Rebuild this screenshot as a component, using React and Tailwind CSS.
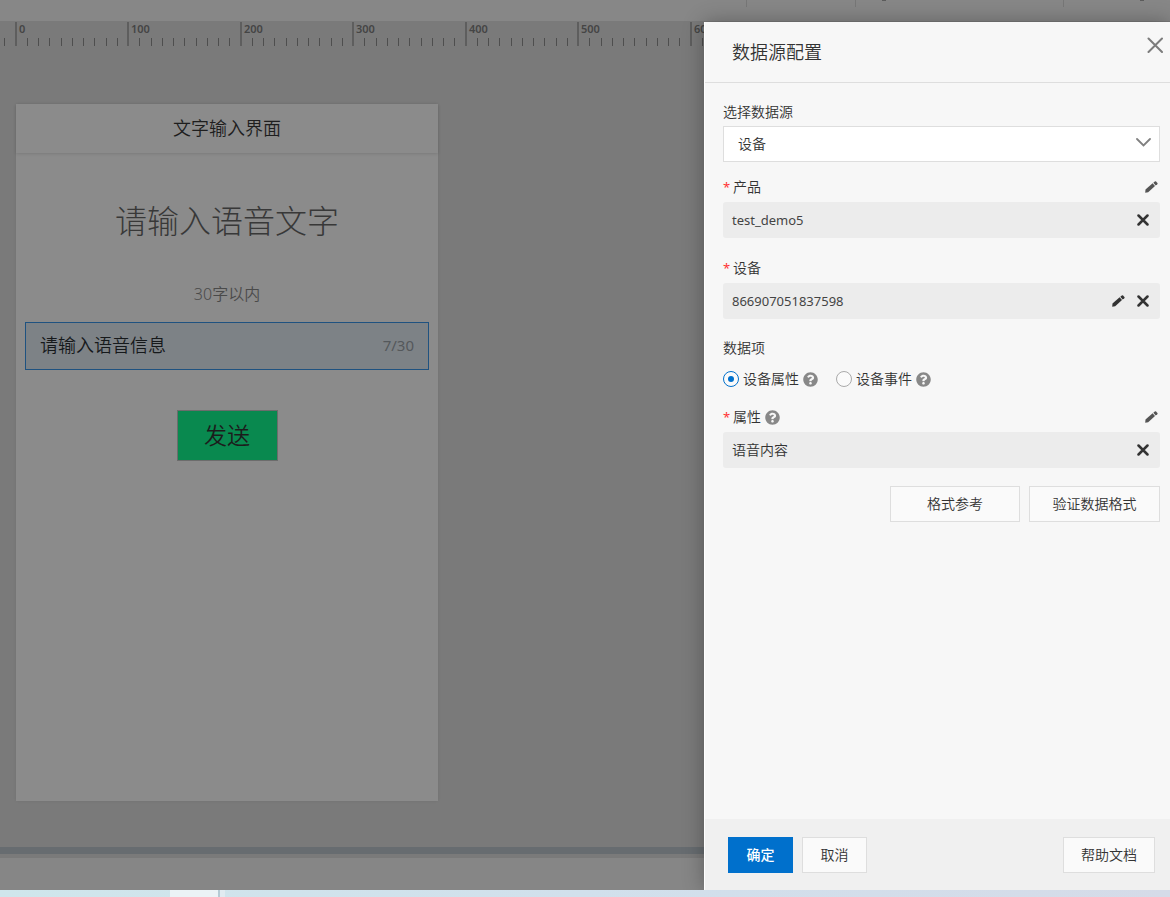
import React, { useState } from 'react';
import { FaQuestionCircle } from 'react-icons/fa';

const RULER_ORIGIN = 16;
const RULER_STEP = 112.5;

const Ruler = () => {
  const ticks = [];
  for (let i = -1; i < 110; i++) {
    const x = Math.floor(RULER_ORIGIN + (i * RULER_STEP) / 10);
    const major = i % 10 === 0;
    ticks.push(
      <rect key={i} x={major ? x - 1 : x} y={major ? 1 : 17} width={major ? 2 : 1} height={major ? 24 : 8} fill={major ? '#5e5e5e' : '#4e4e4e'} />
    );
    if (major) {
      ticks.push(
        <text key={`t${i}`} x={x + 3} y="12" fontSize="11" fontWeight="600" fill="#454545">{i * 10}</text>
      );
    }
  }
  return <svg className="block w-full h-[25px] bg-[#7a7a7a]" aria-hidden="true">{ticks}</svg>;
};

const PencilIcon = () => (
  <svg width="13" height="12" viewBox="0 0 13 12" fill="currentColor" aria-hidden="true">
    <path d="M0.2 11.8 L0.5 8.4 L7.6 2.3 L10 5 L3.2 11.2 Z" />
    <path d="M8.3 1.7 L9.8 0.5 Q10.5 0 11.1 0.6 L12.4 2 Q13 2.7 12.3 3.3 L10.7 4.5 Z" />
  </svg>
);

const CrossIcon = () => (
  <svg width="12" height="12" viewBox="0 0 12 12" fill="none" stroke="currentColor" strokeWidth="2.5" strokeLinecap="round" aria-hidden="true">
    <path d="M1.5 1.5 L10.5 10.5 M10.5 1.5 L1.5 10.5" />
  </svg>
);

const IconButton = ({ label, children }) => (
  <button type="button" aria-label={label} className="flex items-center justify-center cursor-pointer">
    {children}
  </button>
);

const Help = () => <FaQuestionCircle size={15} className="text-[#888888] shrink-0" aria-hidden="true" />;

const Field = ({ label, value, help, editOnLabel, editInside }) => (
  <div>
    <div className="flex items-center justify-between h-5 pr-[2px] text-[#555555]">
      <span className="flex items-center gap-1 text-[#333333]">
        <span className="w-[6px] text-[13px] font-normal text-[#ff3333]">*</span>
        <span>{label}</span>
        {help && <Help />}
      </span>
      {editOnLabel && <IconButton label={`编辑${label}`}><PencilIcon /></IconButton>}
    </div>
    <div className="mt-[5px] h-9 rounded-[3px] bg-[#ececec] pl-[9px] pr-[11px] flex items-center justify-between">
      <span>{value}</span>
      <span className="flex items-center gap-3 text-[#333333]">
        {editInside && <IconButton label={`编辑${label}`}><PencilIcon /></IconButton>}
        <IconButton label={`清除${label}`}><CrossIcon /></IconButton>
      </span>
    </div>
  </div>
);

const RadioOption = ({ label, checked, onChange }) => (
  <label className="flex items-center gap-1 cursor-pointer">
    <input
      type="radio"
      name="dataItem"
      checked={checked}
      onChange={onChange}
      className="appearance-none w-4 h-4 rounded-full border border-[#aaaaaa] bg-[#fafafa] flex items-center justify-center checked:border-[#0070cc] checked:before:block checked:before:w-[6px] checked:before:h-[6px] checked:before:rounded-full checked:before:bg-[#0070cc]"
    />
    <span>{label}</span>
    <Help />
  </label>
);

const PhonePreview = () => {
  const [text, setText] = useState('请输入语音信息');
  return (
    <section className="w-[422px] flex-1 bg-[#8b8b8b] shadow-[0_0_3px_rgba(0,0,0,0.08)] flex flex-col items-center font-[350]">
      <h1 className="w-full h-[49px] leading-[49px] text-center text-[18px] text-[#1e1e1e] shadow-[0_1px_3px_rgba(0,0,0,0.12)]">文字输入界面</h1>
      <p className="mt-12 text-[32px] leading-10 h-10 font-light text-[#383838]">请输入语音文字</p>
      <p className="mt-[41px] text-[16px] leading-6 text-[#4a4a4a]">30字以内</p>
      <div className="mt-4 w-[404px] h-[48px] px-[14px] pb-[2px] border border-[#1f5280] bg-[#7d8286] flex items-center">
        <input
          aria-label="语音信息"
          maxLength={30}
          value={text}
          onChange={(e) => setText(e.target.value)}
          className="flex-1 min-w-0 bg-transparent outline-none text-[18px] text-[#16191b]"
        />
        <span className="text-[15px] font-normal text-[#54585b]">{text.length}/30</span>
      </div>
      <button type="button" className="mt-10 w-[101px] h-[51px] border border-[#6c6c6c] bg-[#09894f] text-[23px] text-[#1c1c1c]">发送</button>
    </section>
  );
};

const plainButton = 'h-9 border border-[#dedede] bg-[#fafafa] text-center cursor-pointer';

const DataSourceDrawer = () => {
  const [item, setItem] = useState('property');
  return (
    <aside className="absolute right-0 top-[22px] bottom-[7px] w-[466px] border-l border-white bg-[#f7f7f7] text-[#333333] text-[14px] leading-5 font-[350] shadow-[0_0_20px_rgba(0,0,0,0.3)] flex flex-col">
      <header className="flex items-start justify-between pl-[27px] pr-[7px] border-b border-[#dedede]">
        <h2 className="text-[18px] leading-[60px]">数据源配置</h2>
        <button type="button" aria-label="关闭" className="mt-[15px] text-[#7c7c7c] cursor-pointer">
          <svg width="16" height="16" viewBox="0 0 16 16" fill="none" stroke="currentColor" strokeWidth="2" strokeLinecap="round" aria-hidden="true">
            <path d="M1.5 1.5 L15 15 M15 1.5 L1.5 15" />
          </svg>
        </button>
      </header>

      <div className="flex-1 pt-[19px] pl-[18px] pr-[10px]">
        <label htmlFor="source" className="block">选择数据源</label>
        <div className="grid items-center mt-1">
          <select id="source" defaultValue="device" className="col-start-1 row-start-1 appearance-none w-full h-9 pl-[14px] pr-8 bg-white border border-[#dedede]">
            <option value="device">设备</option>
          </select>
          <svg className="col-start-1 row-start-1 justify-self-end mr-[9px] mb-1 pointer-events-none" width="15" height="9" viewBox="0 0 15 9" fill="none" stroke="#808080" strokeWidth="1.8" strokeLinecap="round" aria-hidden="true">
            <path d="M1 1 L7.5 7.5 L14 1" />
          </svg>
        </div>

        <div className="mt-[15px]">
          <Field label="产品" value={<span className="text-[13px] font-normal text-[#444444]">test_demo5</span>} editOnLabel />
        </div>
        <div className="mt-5">
          <Field label="设备" value={<span className="text-[13px] font-normal text-[#444444]">866907051837598</span>} editInside />
        </div>

        <fieldset className="mt-[19px]">
          <legend>数据项</legend>
          <div className="mt-[11px] flex items-center gap-[18px]">
            <RadioOption label="设备属性" checked={item === 'property'} onChange={() => setItem('property')} />
            <RadioOption label="设备事件" checked={item === 'event'} onChange={() => setItem('event')} />
          </div>
        </fieldset>

        <div className="mt-[18px]">
          <Field label="属性" value="语音内容" help editOnLabel />
        </div>

        <div className="mt-[18px] flex justify-end gap-[9px]">
          <button type="button" className={`${plainButton} w-[130px]`}>格式参考</button>
          <button type="button" className={`${plainButton} w-[131px]`}>验证数据格式</button>
        </div>
      </div>

      <footer className="h-[71px] bg-[#f0f0f0] pl-[23px] pr-[15px] flex items-center gap-[9px]">
        <button type="button" className="w-[65px] h-9 bg-[#0070cc] text-white font-medium cursor-pointer">确定</button>
        <button type="button" className={`${plainButton} w-[65px]`}>取消</button>
        <button type="button" className={`${plainButton} w-[92px] ml-auto`}>帮助文档</button>
      </footer>
    </aside>
  );
};

export default function App() {
  return (
    <div className="relative min-h-screen overflow-hidden flex flex-col bg-[#7a7a7a] font-['Noto_Sans','Noto_Sans_CJK_SC',sans-serif]">
      {/* Toolbar */}
      <div className="h-[21px] bg-[#878787] flex justify-end">
        <div className="w-[109px] h-[7px] border-l border-[#777777]" />
        <div className="w-[208px] h-[7px] border-l border-[#777777] pl-[26px]">
          <div className="w-1 h-px bg-[#5c5c5c]" />
        </div>
        <div className="w-[107px] h-[7px] border-l border-[#777777] pl-[76px]">
          <div className="w-1 h-px bg-[#5c5c5c]" />
        </div>
      </div>
      <Ruler />

      {/* Canvas */}
      <main className="flex-1 flex flex-col pt-[58px] pl-4 pb-[46px]">
        <PhonePreview />
      </main>

      {/* Bottom panel */}
      <div className="h-[7px] bg-[#676c70]" />
      <div className="mt-1 h-8 bg-[#868686]" />

      <DataSourceDrawer />

      {/* Taskbar */}
      <div className="relative z-10 h-[7px] flex bg-linear-to-r from-[#cfe6ec] via-[#d1e0ec] to-[#d5dbe8]">
        <div className="ml-[170px] w-12 bg-[#ebf3f6]" />
        <div className="w-[2px] bg-[#b5cbd5]" />
        <div className="w-[5px] bg-[#e0ebf1]" />
      </div>
    </div>
  );
}
